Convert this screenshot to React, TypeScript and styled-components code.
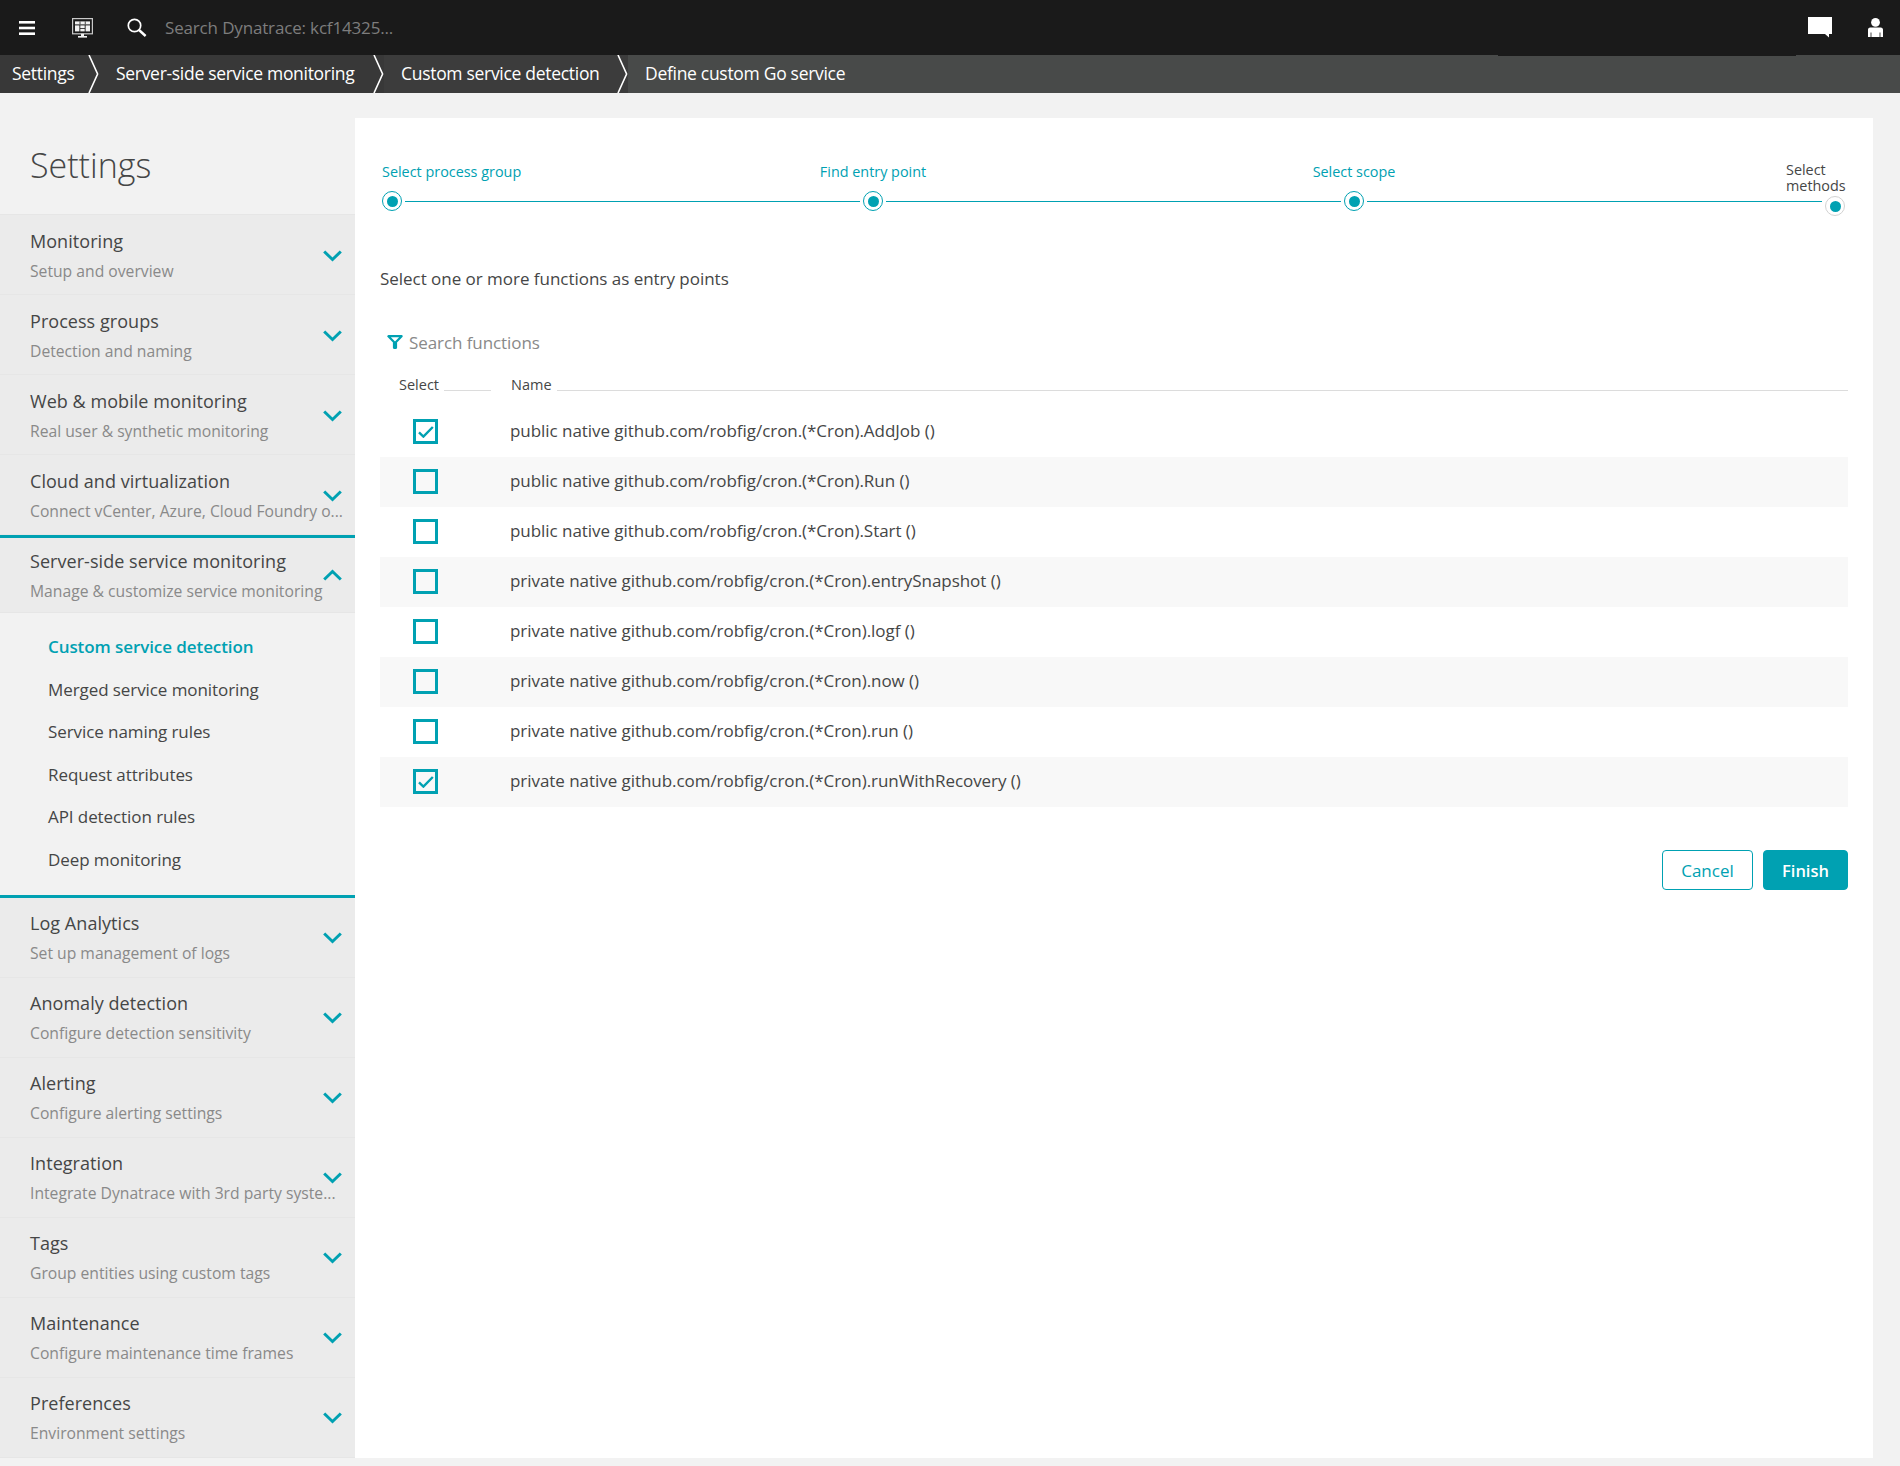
import React from "react";
import styled, { createGlobalStyle } from "styled-components";

const TEAL = "#00a1b2";
const TEXT = "#454646";
const MUTED = "#898989";

const GlobalStyle = createGlobalStyle`
  html, body {
    margin: 0;
    padding: 0;
    background: #f2f2f2;
    font-family: "Open Sans", "Noto Sans", "Liberation Sans", sans-serif;
    color: ${TEXT};
  }
  * { box-sizing: border-box; }
`;

const Page = styled.div`
  width: 1900px;
  height: 1466px;
  display: flex;
  flex-direction: column;
  overflow: hidden;
`;

const TopBar = styled.header`
  position: relative;
  height: 55px;
  flex: none;
  background: #1a1a1a;
  display: flex;
  align-items: center;
  padding: 0 17px 0 19px;

  &::after {
    content: "";
    position: absolute;
    left: 1498px;
    width: 298px;
    top: 55px;
    height: 1px;
    background: #1a1a1a;
  }
`;

const IconSlot = styled.span<{ $ml?: number }>`
  display: flex;
  margin-left: ${(p) => p.$ml ?? 0}px;
`;

const SearchText = styled.span`
  margin-left: 18px;
  font-size: 17px;
  letter-spacing: -0.16px;
  color: #7d7d7d;
`;

const TopRight = styled.div`
  margin-left: auto;
  display: flex;
  align-items: center;
  gap: 36px;
`;

const Crumbs = styled.nav`
  height: 38px;
  flex: none;
  display: flex;
  background: #484a49;
`;

const Crumb = styled.div<{ $width?: number; $bg: string; $pad: number }>`
  display: flex;
  align-items: center;
  width: ${(p) => (p.$width ? `${p.$width}px` : "auto")};
  flex: ${(p) => (p.$width ? "none" : 1)};
  background: ${(p) => p.$bg};
  padding-left: ${(p) => p.$pad}px;
  color: #fff;
  font-size: 17.5px;
  letter-spacing: -0.3px;
  line-height: 36px;
  white-space: nowrap;

  svg {
    margin-left: auto;
    flex: none;
  }
`;

const CrumbLabel = styled.span`
  margin-bottom: 3px;
`;

const Body = styled.div`
  flex: 1;
  display: flex;
  min-height: 0;
  padding-bottom: 8px;
`;

const Sidebar = styled.aside`
  width: 355px;
  flex: none;
  display: flex;
  flex-direction: column;
`;

const SideTitle = styled.h1`
  margin: 0;
  height: 122px;
  flex: none;
  padding: 47px 0 0 30px;
  font-size: 34px;
  line-height: 50px;
  font-weight: 300;
  color: ${TEXT};
  border-bottom: 1px solid #e6e6e6;
`;

const SideRow = styled.div<{ $h?: number }>`
  height: ${(p) => p.$h ?? 80}px;
  flex: none;
  display: flex;
  align-items: center;
  padding: 0 13px 0 30px;
  background: #ebebeb;
  border-bottom: 1px solid #e6e6e6;
  white-space: nowrap;
`;

const RowText = styled.div<{ $top: number }>`
  flex: 1;
  width: 0;
  display: flex;
  flex-direction: column;
  gap: 8px;
  padding-top: ${(p) => p.$top}px;
`;

const RowTitle = styled.div`
  font-size: 18px;
  line-height: 22px;
  letter-spacing: 0.05px;
  color: ${TEXT};
`;

const RowSub = styled.div`
  font-size: 15.7px;
  line-height: 22px;
  color: ${MUTED};
`;

const ChevronSlot = styled.span<{ $top: number }>`
  display: flex;
  flex: none;
  padding-top: ${(p) => p.$top}px;
`;

const ActiveBlock = styled.div`
  flex: none;
  border-top: 3px solid ${TEAL};
  border-bottom: 3px solid ${TEAL};
`;

const SubList = styled.div`
  height: 282px;
  padding: 13px 0 0 48px;
  display: flex;
  flex-direction: column;
`;

const SubItem = styled.div<{ $active?: boolean }>`
  height: 42.6px;
  line-height: 42.6px;
  font-size: 17px;
  letter-spacing: -0.08px;
  font-weight: ${(p) => (p.$active ? 600 : 400)};
  color: ${(p) => (p.$active ? TEAL : TEXT)};
`;

const Panel = styled.main`
  width: 1518px;
  flex: none;
  margin-top: 25px;
  background: #fff;
  padding: 42px 25px 0;
  display: flex;
  flex-direction: column;
`;

const Stepper = styled.div`
  height: 100px;
  flex: none;
  display: flex;
  align-items: flex-start;
  padding: 0 3px 0 2px;
`;

const Step = styled.div<{ $align: string; $last?: boolean }>`
  width: 20px;
  flex: none;
  display: flex;
  flex-direction: column;
  align-items: ${(p) => p.$align};
  padding-top: ${(p) => (p.$last ? 2 : 1)}px;
`;

const StepLabel = styled.div<{ $done?: boolean }>`
  font-size: 14.4px;
  line-height: ${(p) => (p.$done ? "22px" : "16px")};
  color: ${(p) => (p.$done ? TEAL : TEXT)};
  white-space: ${(p) => (p.$done ? "nowrap" : "normal")};
  width: ${(p) => (p.$done ? "auto" : "59px")};
  flex: none;
  margin-left: ${(p) => (p.$done ? 0 : -39)}px;
`;

const StepDot = styled.span<{ $done?: boolean }>`
  width: 20px;
  height: 20px;
  margin-top: ${(p) => (p.$done ? 8 : 2)}px;
  flex: none;
  align-self: flex-end;
  border-radius: 50%;
  background: #fff;
  border: 1px solid ${(p) => (p.$done ? TEAL : "#d2d2d2")};
  display: flex;
  align-items: center;
  justify-content: center;

  &::before {
    content: "";
    width: 11px;
    height: 11px;
    border-radius: 50%;
    background: ${TEAL};
  }
`;

const CenterStep = styled(Step)`
  ${StepDot} {
    align-self: center;
  }
`;

const Connector = styled.span`
  flex: 1;
  height: 1px;
  margin: 40.5px 3px 0;
  background: ${TEAL};
`;

const Heading = styled.div`
  height: 38px;
  flex: none;
  font-size: 17px;
  letter-spacing: -0.03px;
  line-height: 38px;
`;

const SearchRow = styled.div`
  height: 30px;
  margin-top: 29px;
  margin-bottom: 1px;
  flex: none;
  display: flex;
  align-items: center;
  padding-left: 7px;
  gap: 6px;
  font-size: 17px;
  letter-spacing: -0.08px;
  color: ${MUTED};
`;

const TableHead = styled.div`
  height: 34px;
  margin-bottom: 15px;
  flex: none;
  display: flex;
  font-size: 14.5px;
`;

const HeadCell = styled.div<{ $width?: number; $pad: number }>`
  display: flex;
  align-items: center;
  gap: 5px;
  padding: 19px 0 0 ${(p) => p.$pad}px;
  width: ${(p) => (p.$width ? `${p.$width}px` : "auto")};
  flex: ${(p) => (p.$width ? "none" : 1)};
  height: 33px;

  &::after {
    content: "";
    flex: 1;
    align-self: flex-end;
    border-bottom: 1px solid #dcdcdc;
  }
`;

const FnRow = styled.div<{ $striped: boolean }>`
  height: 50px;
  flex: none;
  display: flex;
  align-items: center;
  padding: 0 0 1px 33px;
  gap: 72px;
  font-size: 17px;
  letter-spacing: -0.05px;
  background: ${(p) => (p.$striped ? "#f8f8f8" : "#fff")};
`;

const FnName = styled.span`
  margin-bottom: 2px;
`;

const CheckBox = styled.span`
  width: 25px;
  height: 25px;
  flex: none;
  border: 3px solid ${TEAL};
  display: flex;
  align-items: center;
  justify-content: center;
`;

const Actions = styled.div`
  margin-top: 43px;
  display: flex;
  justify-content: flex-end;
  gap: 10px;
`;

const Button = styled.button<{ $primary?: boolean; $width: number }>`
  width: ${(p) => p.$width}px;
  height: 40px;
  border-radius: 4px;
  border: 1px solid ${TEAL};
  background: ${(p) => (p.$primary ? TEAL : "#fff")};
  color: ${(p) => (p.$primary ? "#fff" : TEAL)};
  font-family: inherit;
  font-size: ${(p) => (p.$primary ? 16.5 : 17)}px;
  font-weight: ${(p) => (p.$primary ? 600 : 400)};
  padding: 0;
`;

const MenuIcon = () => (
  <svg width="16" height="14" viewBox="0 0 16 14" fill="#fff">
    <rect y="0" width="16" height="2.6" />
    <rect y="5.7" width="16" height="2.6" />
    <rect y="11.4" width="16" height="2.6" />
  </svg>
);

const MonitorIcon = () => (
  <svg width="21" height="20" viewBox="0 0 21 20">
    <rect x="0.6" y="0.6" width="19.8" height="15.2" fill="none" stroke="#c9c9c9" strokeWidth="1.2" />
    <rect x="2" y="2" width="17" height="12.4" fill="#1a1a1a" />
    <g fill="#f2f2f2">
      <rect x="3" y="3.4" width="15" height="3" />
      <rect x="3" y="7.4" width="4.4" height="6" />
      <rect x="8.3" y="7.4" width="4.4" height="2.6" />
      <rect x="8.3" y="10.8" width="4.4" height="2.6" />
      <rect x="13.6" y="7.4" width="4.4" height="6" />
      <rect x="9" y="15.8" width="3" height="2.4" />
      <rect x="6" y="18" width="9" height="1.6" />
    </g>
    <rect x="7.6" y="3.4" width="0.8" height="3" fill="#1a1a1a" />
    <rect x="12.8" y="3.4" width="0.8" height="3" fill="#1a1a1a" />
  </svg>
);

const SearchIcon = () => (
  <svg width="20" height="19" viewBox="0 0 20 19" fill="none" stroke="#fff">
    <circle cx="7.5" cy="7.5" r="6.2" strokeWidth="1.7" />
    <line x1="12" y1="12" x2="18.6" y2="18" strokeWidth="2.4" />
  </svg>
);

const ChatIcon = () => (
  <svg width="24" height="21" viewBox="0 0 24 21" fill="#fff">
    <path d="M0 0h24v17h-3v3.6L17 17H0z" />
  </svg>
);

const UserIcon = () => (
  <svg width="15" height="19" viewBox="0 0 15 19" fill="#fff">
    <circle cx="7.5" cy="4.4" r="4.4" />
    <path d="M2.2 9.6h10.6c1.3 0 2.2 1 2.2 2.2V19H12.4v-4.6h-.8V19H3.4v-4.6h-.8V19H0v-7.2c0-1.2.9-2.2 2.2-2.2z" />
  </svg>
);

const CrumbArrow = () => (
  <svg width="11" height="38" viewBox="0 0 11 38" fill="none" stroke="#fff" strokeWidth="1.6">
    <polyline points="1,0 9.6,19 1,38" />
  </svg>
);

const Chevron = ({ up }: { up?: boolean }) => (
  <svg width="19" height="12" viewBox="0 0 19 12" fill="none" stroke={TEAL} strokeWidth="3">
    <polyline points={up ? "1.2,10.5 9.5,2.5 17.8,10.5" : "1.2,1.5 9.5,9.5 17.8,1.5"} />
  </svg>
);

const Funnel = () => (
  <svg width="16" height="14" viewBox="0 0 16 14" fill="none" stroke={TEAL} strokeWidth="2.2">
    <path d="M1.4 1.2h13.2L9 7v5.8H7V7z" strokeLinejoin="round" />
  </svg>
);

const Tick = () => (
  <svg width="16" height="12" viewBox="0 0 16 12" fill="none" stroke={TEAL} strokeWidth="2.4">
    <polyline points="1,6.4 5.4,10.6 14.8,1" />
  </svg>
);

type Section = { title: string; sub: string };

const beforeActive: Section[] = [
  { title: "Monitoring", sub: "Setup and overview" },
  { title: "Process groups", sub: "Detection and naming" },
  { title: "Web & mobile monitoring", sub: "Real user & synthetic monitoring" },
  { title: "Cloud and virtualization", sub: "Connect vCenter, Azure, Cloud Foundry o..." },
];

const afterActive: Section[] = [
  { title: "Log Analytics", sub: "Set up management of logs" },
  { title: "Anomaly detection", sub: "Configure detection sensitivity" },
  { title: "Alerting", sub: "Configure alerting settings" },
  { title: "Integration", sub: "Integrate Dynatrace with 3rd party syste..." },
  { title: "Tags", sub: "Group entities using custom tags" },
  { title: "Maintenance", sub: "Configure maintenance time frames" },
  { title: "Preferences", sub: "Environment settings" },
];

const subItems = [
  "Custom service detection",
  "Merged service monitoring",
  "Service naming rules",
  "Request attributes",
  "API detection rules",
  "Deep monitoring",
];

const functions = [
  { name: "public native github.com/robfig/cron.(*Cron).AddJob ()", checked: true },
  { name: "public native github.com/robfig/cron.(*Cron).Run ()", checked: false },
  { name: "public native github.com/robfig/cron.(*Cron).Start ()", checked: false },
  { name: "private native github.com/robfig/cron.(*Cron).entrySnapshot ()", checked: false },
  { name: "private native github.com/robfig/cron.(*Cron).logf ()", checked: false },
  { name: "private native github.com/robfig/cron.(*Cron).now ()", checked: false },
  { name: "private native github.com/robfig/cron.(*Cron).run ()", checked: false },
  { name: "private native github.com/robfig/cron.(*Cron).runWithRecovery ()", checked: true },
];

type RowProps = Section & { h?: number; up?: boolean; textTop?: number; chevTop?: number };

const SectionRow = ({ title, sub, h, up, textTop = 2, chevTop = 0 }: RowProps) => (
  <SideRow $h={h}>
    <RowText $top={textTop}>
      <RowTitle>{title}</RowTitle>
      <RowSub>{sub}</RowSub>
    </RowText>
    <ChevronSlot $top={chevTop}>
      <Chevron up={up} />
    </ChevronSlot>
  </SideRow>
);

export default function App() {
  return (
    <Page>
      <GlobalStyle />
      <TopBar>
        <MenuIcon />
        <IconSlot $ml={37}>
          <MonitorIcon />
        </IconSlot>
        <IconSlot $ml={34}>
          <SearchIcon />
        </IconSlot>
        <SearchText>Search Dynatrace: kcf14325...</SearchText>
        <TopRight>
          <ChatIcon />
          <UserIcon />
        </TopRight>
      </TopBar>
      <Crumbs>
        <Crumb $width={99} $bg="#383838" $pad={12}>
          <CrumbLabel>Settings</CrumbLabel>
          <CrumbArrow />
        </Crumb>
        <Crumb $width={285} $bg="#383838" $pad={17}>
          <CrumbLabel>Server-side service monitoring</CrumbLabel>
          <CrumbArrow />
        </Crumb>
        <Crumb $width={244} $bg="#3c3c3c" $pad={17}>
          <CrumbLabel>Custom service detection</CrumbLabel>
          <CrumbArrow />
        </Crumb>
        <Crumb $bg="#484a49" $pad={17}>
          <CrumbLabel>Define custom Go service</CrumbLabel>
        </Crumb>
      </Crumbs>
      <Body>
        <Sidebar>
          <SideTitle>Settings</SideTitle>
          {beforeActive.map((s) => (
            <SectionRow key={s.title} {...s} chevTop={2} />
          ))}
          <ActiveBlock>
            <SectionRow
              title="Server-side service monitoring"
              sub="Manage & customize service monitoring"
              h={75}
              up
            />
            <SubList>
              {subItems.map((item, i) => (
                <SubItem key={item} $active={i === 0}>
                  {item}
                </SubItem>
              ))}
            </SubList>
          </ActiveBlock>
          {afterActive.map((s) => (
            <SectionRow key={s.title} {...s} textTop={0} />
          ))}
        </Sidebar>
        <Panel>
          <Stepper>
            <Step $align="flex-start">
              <StepLabel $done>Select process group</StepLabel>
              <StepDot $done />
            </Step>
            <Connector />
            <CenterStep $align="center">
              <StepLabel $done>Find entry point</StepLabel>
              <StepDot $done />
            </CenterStep>
            <Connector />
            <CenterStep $align="center">
              <StepLabel $done>Select scope</StepLabel>
              <StepDot $done />
            </CenterStep>
            <Connector />
            <Step $align="flex-start" $last>
              <StepLabel>Select methods</StepLabel>
              <StepDot />
            </Step>
          </Stepper>
          <Heading>Select one or more functions as entry points</Heading>
          <SearchRow>
            <Funnel />
            Search functions
          </SearchRow>
          <TableHead>
            <HeadCell $width={111} $pad={19}>
              Select
            </HeadCell>
            <HeadCell $pad={20}>Name</HeadCell>
          </TableHead>
          {functions.map((fn, i) => (
            <FnRow key={fn.name} $striped={i % 2 === 1}>
              <CheckBox>{fn.checked && <Tick />}</CheckBox>
              <FnName>{fn.name}</FnName>
            </FnRow>
          ))}
          <Actions>
            <Button $width={91}>Cancel</Button>
            <Button $width={85} $primary>
              Finish
            </Button>
          </Actions>
        </Panel>
      </Body>
    </Page>
  );
}
